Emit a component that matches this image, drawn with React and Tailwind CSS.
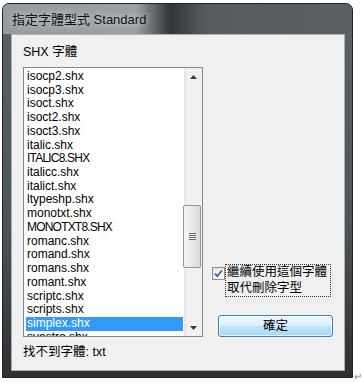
import React from 'react';

const fonts = ['isocp2.shx', 'isocp3.shx', 'isoct.shx', 'isoct2.shx', 'isoct3.shx', 'italic.shx', 'ITALIC8.SHX', 'italicc.shx', 'italict.shx', 'ltypeshp.shx', 'monotxt.shx', 'MONOTXT8.SHX', 'romanc.shx', 'romand.shx', 'romans.shx', 'romant.shx', 'scriptc.shx', 'scripts.shx', 'simplex.shx', 'syastro.shx'];

const selected = 'simplex.shx';

function FontRow({ name }) {
  const active = name === selected;
  const upper = name === name.toUpperCase();
  return (
    <div
      className={
        'h-[13.72px] shrink-0 pl-[1px] leading-[13.72px] text-[12px] whitespace-nowrap ' +
        (active ? 'bg-[#3399ff] text-white' : 'text-black') +
        (upper ? ' tracking-[-0.8px]' : '')
      }
    >
      {name}
    </div>
  );
}

function Arrow({ up }) {
  return (
    <div className="h-[17px] flex items-center justify-center">
      <svg width="7" height="4" viewBox="0 0 7 4">
        {up ? <path d="M0 4 L3.5 0 L7 4 Z" fill="#3c3c3c" /> : <path d="M0 0 L3.5 4 L7 0 Z" fill="#3c3c3c" />}
      </svg>
    </div>
  );
}

function ScrollBar() {
  return (
    <div className="w-[18px] h-full flex flex-col bg-[linear-gradient(90deg,#e3e3e3_0%,#f2f2f2_20%,#f0f0f0_100%)]">
      <Arrow up />
      <div className="h-[120px]" />
      <div className="h-[63px] mx-[1px] -ml-[1px] rounded-[2px] border border-[#959595] bg-[linear-gradient(90deg,#f4f4f4_0%,#e9e9e9_50%,#d9d9d9_100%)] flex items-center justify-center">
        <div className="flex flex-col gap-[1px]">
          <div className="w-[7px] h-[1px] bg-[#6e6e6e]" />
          <div className="w-[7px] h-[1px] bg-[#6e6e6e]" />
          <div className="w-[7px] h-[1px] bg-[#6e6e6e]" />
          <div className="w-[7px] h-[1px] bg-[#6e6e6e]" />
        </div>
      </div>
      <div className="flex-1" />
      <Arrow />
    </div>
  );
}

export default function App() {
  return (
    <div className="w-[363px] h-[382px] bg-white pt-[3px] pl-[2px] relative font-['Liberation_Sans','Noto_Sans_CJK_TC',sans-serif]">
      <div className="w-[351px] h-[375px] rounded-t-[7px] border border-[#1f2326] bg-[linear-gradient(180deg,#5d6266_0%,#4e5357_60%,#2c3033_100%)] flex flex-col overflow-hidden">
        {/* title bar */}
        <div className="h-[30px] shrink-0 flex items-center bg-[linear-gradient(90deg,#959b9e_0%,#9ba1a4_38%,#30353a_48%,#565b5f_58%,#5b6064_100%)]">
          <div className="pl-[9px] pt-[1px] text-[13px] text-[#101010] [text-shadow:0_0_6px_#e8ecee] whitespace-nowrap">
            指定字體型式 Standard
          </div>
        </div>

        {/* client area */}
        <div className="ml-[8px] w-[334px] h-[337px] shrink-0 border border-[#a9b0b4] bg-[#f0f0f0] text-black">
          <div className="pl-[11px] mt-[10px] h-[14px] leading-[14px] text-[12.5px]">SHX 字體</div>

          <div className="flex mt-[8px] pl-[11px]">
            <div className="w-[180px] h-[270px] border border-[#828790] bg-white flex overflow-hidden">
              <div className="w-[160px] h-full pt-[2px] pl-[2px] pr-[1px] flex flex-col overflow-hidden">
                {fonts.map((f) => (
                  <FontRow key={f} name={f} />
                ))}
              </div>
              <ScrollBar />
            </div>

            <div className="ml-[9px] pt-[197px] flex flex-col">
              <div className="flex items-start">
                <div className="mt-[3px] w-[13px] h-[13px] border border-[#8f8f8f] bg-[linear-gradient(135deg,#dcdcdc_0%,#ffffff_100%)] p-[1px]">
                  <div className="w-full h-full bg-[linear-gradient(135deg,#e9e9e9_0%,#ffffff_100%)] flex items-center justify-center">
                    <svg width="9" height="9" viewBox="0 0 9 9">
                      <path d="M1 4.6 L3.4 7.2 L8 1.2" stroke="#3a5ea8" strokeWidth="1.7" fill="none" />
                    </svg>
                  </div>
                </div>
                <div className="w-[106px] h-[33px] border border-dotted border-[#333] px-[1px] text-[12.5px] leading-[15.5px]">
                  繼續使用這個字體
                  <br />
                  取代刪除字型
                </div>
              </div>
              <div className="mt-[18px] ml-[6px] w-[115px] h-[22px] rounded-[3px] border border-[#3c7fb1] bg-[linear-gradient(180deg,#eaf6fd_0%,#d9f0fc_50%,#bee6fd_51%,#a7d9f5_100%)] shadow-[inset_0_0_0_1px_rgba(255,255,255,0.7)] flex items-center justify-center text-[12.5px]">
                確定
              </div>
            </div>
          </div>

          <div className="pl-[11px] mt-[8px] leading-[15px] text-[12.5px]">找不到字體: txt</div>
        </div>
      </div>
      <div className="absolute right-[1px] bottom-[0px] text-[10px] leading-[10px] text-[#8a8a8a]">↵</div>
    </div>
  );
}
